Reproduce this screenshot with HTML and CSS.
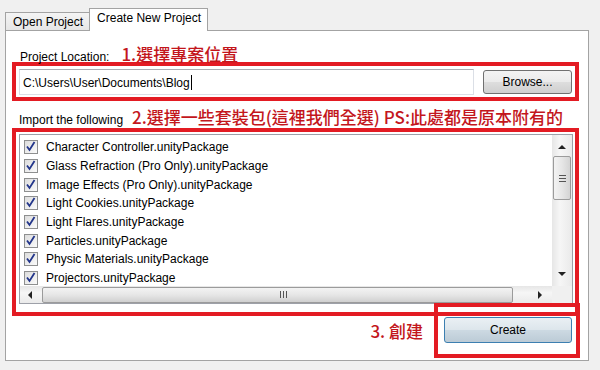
FILE: index.html
```html
<!DOCTYPE html>
<html lang="zh-Hant">
<head>
  <meta charset="UTF-8">
  <title>Create New Project</title>
  <link rel="stylesheet" href="styles.css">
</head>
<body>
  <div class="window">
    <!-- Tabs -->
    <div class="tabs">
      <div class="tab">Open Project</div>
      <div class="tab active">Create New Project</div>
    </div>

    <div class="panel">
      <div class="heading heading-location">
        <span class="label">Project Location:</span>
        <span class="note">1.選擇專案位置</span>
      </div>
      <div class="mark location-row">
        <div class="path-field">C:\Users\User\Documents\Blog<span class="caret"></span></div>
        <button class="btn">Browse...</button>
      </div>

      <div class="heading heading-import">
        <span class="label">Import the following</span>
        <span class="note">2.選擇一些套裝包(這裡我們全選) PS:此處都是原本附有的</span>
      </div>
      <div class="mark package-box">
        <div class="listbox">
          <ul class="packages" id="packages"></ul>
          <div class="vscroll">
            <span class="arrow up"></span>
            <div class="vthumb"><span class="grip"></span></div>
            <span class="arrow down"></span>
          </div>
          <div class="hscroll">
            <span class="arrow left"></span>
            <div class="hthumb"><span class="grip"></span></div>
            <span class="arrow right"></span>
          </div>
          <div class="corner"></div>
        </div>
      </div>

      <div class="create-row">
        <span class="note">3. 創建</span>
        <div class="mark create-box">
          <button class="btn btn-create">Create</button>
        </div>
      </div>
    </div>
  </div>

  <script>
    const packages = [
      'Character Controller.unityPackage',
      'Glass Refraction (Pro Only).unityPackage',
      'Image Effects (Pro Only).unityPackage',
      'Light Cookies.unityPackage',
      'Light Flares.unityPackage',
      'Particles.unityPackage',
      'Physic Materials.unityPackage',
      'Projectors.unityPackage'
    ];

    const list = document.getElementById('packages');
    const check = '<svg viewBox="0 0 13 13" width="13" height="13"><path d="M3 6.5 L5.5 10 L10.5 2" fill="none" stroke="#22358a" stroke-width="1.8"/></svg>';

    // Every package is ticked
    packages.forEach(name => {
      const li = document.createElement('li');
      li.innerHTML = '<span class="checkbox">' + check + '</span><span>' + name + '</span>';
      list.appendChild(li);
    });
  </script>
</body>
</html>
```

FILE: styles.css
```css
body {
  margin: 0;
  background: #f0f0f0;
  font-family: "Liberation Sans", Arial, sans-serif;
  font-size: 12px;
  color: #000;
}
.window {
  padding: 8px 11px 0 5px;
}
.tabs {
  display: flex;
  height: 23px;
  margin-bottom: -1px;
  position: relative;
  z-index: 1;
}
.tab {
  box-sizing: border-box;
  height: 18px;
  margin-top: 4px;
  padding: 2px 6px 0 7px;
  border: 1px solid #a3a3a3;
  border-bottom: none;
  background: linear-gradient(#f4f4f4, #e6e6e6);
  white-space: nowrap;
}
.tab.active {
  height: 23px;
  margin-top: 0;
  margin-left: -1px;
  width: 119px;
  padding: 2px 0 0 7px;
  background: #fff;
}
.panel {
  box-sizing: border-box;
  height: 331px;
  border: 1px solid #a3a3a3;
  background: #fff;
  padding: 0 9px 0 6px;
}
.heading {
  display: flex;
  align-items: baseline;
  box-sizing: border-box;
}
.heading-location {
  height: 31px;
  padding: 13px 0 0 8px;
}
.heading-import {
  height: 27px;
  padding: 6px 0 0 7px;
}
.note {
  font-family: "Noto Sans CJK TC", "Noto Sans", sans-serif;
  font-size: 17px;
  font-weight: 500;
  color: #c3161c;
  line-height: 20px;
  white-space: nowrap;
}
.heading-location .note {
  margin-left: 12px;
}
.heading-import .note {
  margin-left: 9px;
}
.mark {
  box-sizing: border-box;
  border: 4px solid #e31b23;
}
.location-row {
  display: flex;
  align-items: center;
  gap: 9px;
  height: 39px;
  padding: 0 3px;
}
.path-field {
  box-sizing: border-box;
  flex: 1;
  height: 26px;
  padding: 5px 3px 0;
  border: 1px solid #dbdfe6;
  border-top-color: #abadb3;
  white-space: nowrap;
}
.caret {
  display: inline-block;
  width: 1px;
  height: 15px;
  margin-left: 1px;
  vertical-align: -3px;
  background: #000;
}
.btn {
  box-sizing: border-box;
  font-family: inherit;
  font-size: 12px;
  color: #000;
  border: 1px solid #707070;
  border-radius: 3px;
  background: linear-gradient(#f3f3f3 0%, #ebebeb 48%, #dddddd 52%, #cfcfcf 100%);
  padding: 0;
}
.location-row .btn {
  width: 89px;
  height: 24px;
}
.package-box {
  height: 188px;
  padding: 2px 2px 8px 3px;
}
.listbox {
  box-sizing: border-box;
  height: 170px;
  border: 1px solid #9da0a8;
  display: grid;
  grid-template-columns: 1fr 20px;
  grid-template-rows: 1fr 17px;
  overflow: hidden;
}
.packages {
  list-style: none;
  margin: 0;
  padding: 3px 0 0 4px;
  overflow: hidden;
}
.packages li {
  display: flex;
  align-items: center;
  gap: 8px;
  height: 18.7px;
  white-space: nowrap;
}
.checkbox {
  box-sizing: border-box;
  display: flex;
  width: 14px;
  height: 14px;
  border: 1px solid #8e8f8f;
  background: linear-gradient(135deg, #dcdcdc, #fbfbfb);
}
.checkbox svg {
  display: block;
  margin: -1px 0 0 -1px;
}
.vscroll {
  display: flex;
  flex-direction: column;
  align-items: center;
  background: linear-gradient(90deg, #e6e6e6, #f6f6f6 40%, #eaeaea);
  padding: 10px 0 0;
}
.vthumb {
  box-sizing: border-box;
  width: 18px;
  height: 44px;
  margin-top: 7px;
  border: 1px solid #9b9b9b;
  border-radius: 2px;
  background: linear-gradient(90deg, #f3f3f3, #e6e6e6 50%, #d4d4d4);
  display: flex;
  align-items: center;
  justify-content: center;
}
.vthumb .grip {
  width: 7px;
  height: 5px;
  border-top: 1px solid #555;
  border-bottom: 1px solid #555;
  position: relative;
}
.vthumb .grip::after {
  content: "";
  position: absolute;
  left: 0;
  right: 0;
  top: 2px;
  border-top: 1px solid #555;
}
.hscroll {
  display: flex;
  align-items: center;
  background: linear-gradient(#e6e6e6, #f6f6f6 40%, #eaeaea);
  padding-left: 8px;
}
.hthumb {
  box-sizing: border-box;
  width: 471px;
  height: 16px;
  margin-left: 10px;
  border: 1px solid #9b9b9b;
  border-radius: 2px;
  background: linear-gradient(#f3f3f3, #e6e6e6 50%, #d0d0d0);
  display: flex;
  align-items: center;
  justify-content: center;
  padding-left: 12px;
}
.hthumb .grip {
  width: 5px;
  height: 7px;
  border-left: 1px solid #555;
  border-right: 1px solid #555;
  position: relative;
}
.hthumb .grip::after {
  content: "";
  position: absolute;
  top: 0;
  bottom: 0;
  left: 2px;
  border-left: 1px solid #555;
}
.corner {
  background: #f0f0f0;
}
.arrow {
  width: 0;
  height: 0;
  border: 4px solid transparent;
}
.arrow.up {
  border-top: none;
  border-bottom: 4px solid #222;
}
.arrow.down {
  margin-top: auto;
  margin-bottom: 10px;
  border-bottom: none;
  border-top: 4px solid #222;
}
.arrow.left {
  border-left: none;
  border-right: 4px solid #222;
}
.arrow.right {
  margin-left: auto;
  margin-right: 10px;
  border-right: none;
  border-left: 4px solid #222;
}
.create-row {
  display: flex;
  align-items: center;
  justify-content: flex-end;
  gap: 11px;
  margin-top: -13px;
  margin-right: -1px;
}
.create-box {
  width: 146px;
  height: 55px;
  padding: 10px 4px 0 6px;
}
.btn-create {
  width: 128px;
  height: 26px;
  border-color: #3c7fb1;
  background: linear-gradient(#eaf0f4 0%, #dde6ec 48%, #ccd9e2 52%, #bccbd6 100%);
}
```
